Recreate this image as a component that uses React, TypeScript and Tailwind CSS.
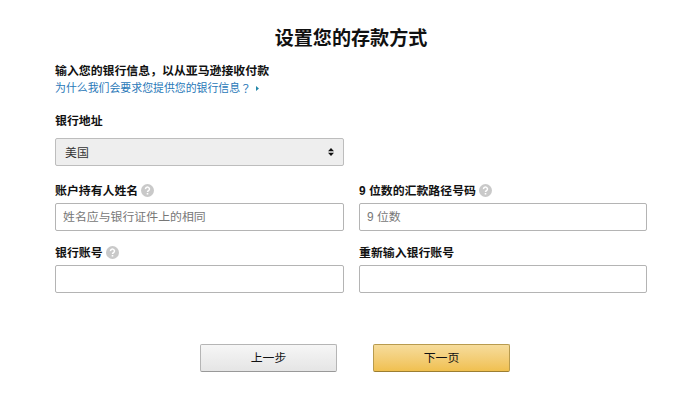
import type { ReactNode } from "react";

function HelpIcon() {
  return (
    <svg className="ml-[3px] size-[13px] shrink-0 -translate-y-px" viewBox="0 0 13 13" aria-hidden="true">
      <circle cx="6.5" cy="6.5" r="6.5" fill="#c9c9c9" />
      <path d="M4.5 5.1a2 1.9 0 1 1 3.1 1.5c-.7.5-1.1.7-1.1 1.5" fill="none" stroke="#fff" strokeWidth="1.5" />
      <rect x="5.7" y="9" width="1.6" height="1.5" fill="#fff" />
    </svg>
  );
}

function Label({ children, help }: { children: ReactNode; help?: boolean }) {
  return (
    <div className="flex h-[18px] items-center text-[11.9px] leading-[18px] font-bold whitespace-nowrap">
      <span>{children}</span>
      {help && <HelpIcon />}
    </div>
  );
}

function Field({ label, help, placeholder }: { label: string; help?: boolean; placeholder?: string }) {
  return (
    <label className="block">
      <Label help={help}>{label}</Label>
      <input
        className="mt-[3px] block h-[28px] w-full rounded-[2px] border border-[#b4b4b4] bg-white px-[7px] text-[11.9px] placeholder:text-[#777] placeholder:opacity-100"
        placeholder={placeholder}
      />
    </label>
  );
}

export default function App() {
  return (
    <main className="h-[400px] w-[689px] overflow-hidden bg-white pr-[42px] pl-[55px] font-['Liberation_Sans','Noto_Sans_CJK_SC',sans-serif] text-[#111]">
      <h1 className="pt-[25px] text-center text-[19.1px] leading-[28px] font-bold">设置您的存款方式</h1>

      <p className="mt-[10px] h-[17px] text-[11.9px] leading-[17px] font-bold">输入您的银行信息，以从亚马逊接收付款</p>
      <a className="flex h-[17px] items-center text-[10.9px] leading-[17px] text-[#2878b8]">
        <span>为什么我们会要求您提供您的银行信息</span>
        <span className="font-['Noto_Sans_CJK_TC',sans-serif]" lang="zh-TW">？</span>
        <svg className="ml-[5px] h-[5px] w-[3px]" viewBox="0 0 3 5" aria-hidden="true">
          <path d="M0 0 3 2.5 0 5Z" fill="#2487a8" />
        </svg>
      </a>

      <div className="mt-[15px] w-[289px]">
        <Label>银行地址</Label>
        <div className="mt-[8px] flex h-[28px] items-center justify-between rounded-[2px] border border-[#bdbdbd] bg-[#eee] pr-[9px] pl-[9px] text-[11.9px] text-[#333]">
          <span className="pt-[3px]">美国</span>
          <svg className="h-[8px] w-[6px]" viewBox="0 0 6 8" aria-hidden="true">
            <path d="M3 0 6 3.3H0ZM3 8 0 4.7H6Z" fill="#111" />
          </svg>
        </div>
      </div>

      <div className="mt-[16px] grid grid-cols-[289px_288px] gap-x-[15px] gap-y-[13px]">
        <Field label="账户持有人姓名" help placeholder="姓名应与银行证件上的相同" />
        <Field label="9 位数的汇款路径号码" help placeholder="9 位数" />
        <Field label="银行账号" help />
        <Field label="重新输入银行账号" />
      </div>

      <div className="mt-[51px] ml-[145px] flex gap-[36px] text-[11.9px]">
        <button className="h-[28px] w-[137px] rounded-[2px] border border-[#b5b5b5] border-b-[#999] bg-linear-to-b from-[#f6f6f6] to-[#e5e5e5] pt-[2px]">上一步</button>
        <button className="h-[28px] w-[137px] rounded-[2px] border border-[#b89b4e] border-b-[#9c7e31] bg-linear-to-b from-[#f6dc9b] to-[#f0c04f] pt-[2px]">下一页</button>
      </div>
    </main>
  );
}
